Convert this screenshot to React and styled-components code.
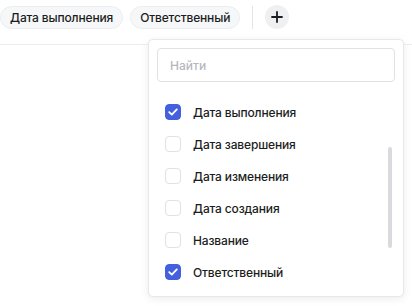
import React from "react";
import styled, { createGlobalStyle } from "styled-components";

const Global = createGlobalStyle`
  html, body { margin: 0; padding: 0; background: #fff; }
  body { font-family: Inter, "Noto Sans", sans-serif; color: #1b1d21; }
  * { box-sizing: border-box; }
`;

const Page = styled.div`
  position: relative;
  width: 412px;
  height: 306px;
  overflow: hidden;
`;

const Toolbar = styled.div`
  display: flex;
  align-items: center;
  height: 45px;
  padding: 0 0 10px 0;
  border-bottom: 1px solid #ebedf0;
`;

const Chip = styled.div`
  display: flex;
  align-items: center;
  height: 23px;
  padding: 0 9px;
  margin-right: ${(p) => p.$gap || 0}px;
  border-radius: 12px;
  background: #f6f7f8;
  border: 1px solid #ebedf0;
  font-size: 12px;
  font-weight: 500;
  letter-spacing: -0.15px;
  color: #1b1d21;
  white-space: nowrap;
`;

const Divider = styled.div`
  width: 1px;
  height: 23px;
  background: #e3e5e8;
  margin: 0 12px;
`;

const PlusButton = styled.button`
  width: 24px;
  height: 24px;
  border-radius: 50%;
  border: none;
  background: #eff0f2;
  display: flex;
  align-items: center;
  justify-content: center;
  padding: 0;
`;

const Menu = styled.div`
  position: absolute;
  left: 148px;
  top: 39px;
  width: 256px;
  height: 258px;
  background: #fff;
  border: 1px solid #e6e8eb;
  border-radius: 5px;
  box-shadow: 0 2px 8px rgba(0, 0, 0, 0.08);
  padding: 8px;
`;

const Search = styled.input`
  width: 100%;
  height: 34px;
  border: 1px solid #dfe1e5;
  border-radius: 4px;
  padding: 0 12px;
  font-family: inherit;
  font-size: 12px;
  font-weight: 500;
  outline: none;
  &::placeholder { color: #b4b8be; }
`;

const List = styled.div`
  position: relative;
  margin-top: 14px;
  display: flex;
  flex-direction: column;
`;

const Item = styled.label`
  display: flex;
  align-items: center;
  height: 32px;
  padding-left: 8px;
  gap: 12px;
  font-size: 12px;
  font-weight: 500;
  letter-spacing: -0.15px;
  color: #1b1d21;
  cursor: pointer;
`;

const Box = styled.span`
  width: 16px;
  height: 16px;
  border-radius: 4px;
  display: flex;
  align-items: center;
  justify-content: center;
  background: ${(p) => (p.$checked ? "#4560dc" : "#fff")};
  border: 1px solid ${(p) => (p.$checked ? "#4560dc" : "#dfe1e5")};
`;

const Scrollbar = styled.div`
  position: absolute;
  right: 3px;
  top: 51px;
  width: 4px;
  height: 101px;
  border-radius: 2px;
  background: #d8dadd;
`;

const items = [
  ["Дата выполнения", true],
  ["Дата завершения", false],
  ["Дата изменения", false],
  ["Дата создания", false],
  ["Название", false],
  ["Ответственный", true],
];

export default function App() {
  return (
    <Page>
      <Global />
      <Toolbar>
        <Chip $gap={7}>Дата выполнения</Chip>
        <Chip>Ответственный</Chip>
        <Divider />
        <PlusButton>
          <svg width="12" height="12" viewBox="0 0 12 12">
            <path d="M6 1v10M1 6h10" stroke="#1b1d21" strokeWidth="1.8" strokeLinecap="round" />
          </svg>
        </PlusButton>
      </Toolbar>
      <Menu>
        <Search placeholder="Найти" />
        <List>
          {items.map(([label, checked]) => (
            <Item key={label}>
              <Box $checked={checked}>
                {checked && (
                  <svg width="10" height="8" viewBox="0 0 10 8">
                    <path d="M1.2 4.2L3.8 6.6L8.8 1.4" fill="none" stroke="#fff" strokeWidth="1.8" strokeLinecap="round" strokeLinejoin="round" />
                  </svg>
                )}
              </Box>
              {label}
            </Item>
          ))}
          <Scrollbar />
        </List>
      </Menu>
    </Page>
  );
}
